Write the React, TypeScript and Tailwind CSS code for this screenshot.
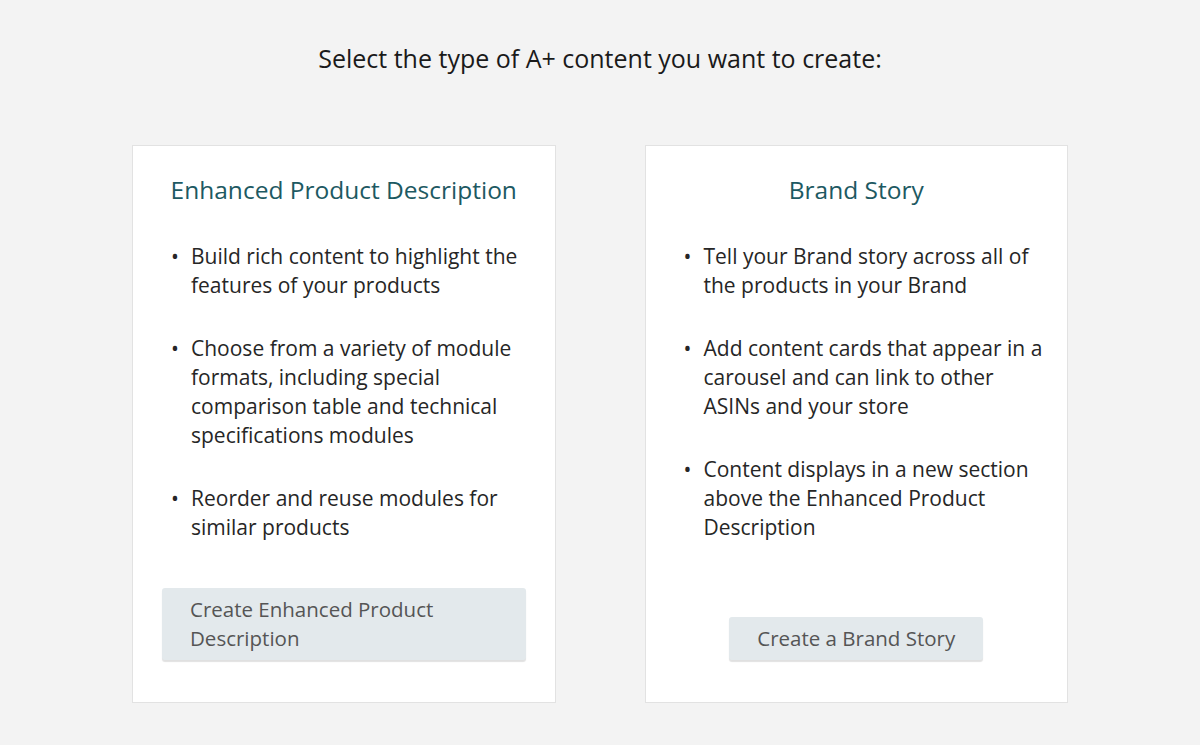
import React from "react";

const cards = [
  {
    title: "Enhanced Product Description",
    bullets: [
      "Build rich content to highlight the features of your products",
      "Choose from a variety of module formats, including special comparison table and technical specifications modules",
      "Reorder and reuse modules for similar products",
    ],
    button: "Create Enhanced Product Description",
  },
  {
    title: "Brand Story",
    bullets: [
      "Tell your Brand story across all of the products in your Brand",
      "Add content cards that appear in a carousel and can link to other ASINs and your store",
      "Content displays in a new section above the Enhanced Product Description",
    ],
    button: "Create a Brand Story",
  },
];

const App: React.FC = () => (
  <div className="min-h-[745px] bg-[#f3f3f3] pt-[42px] font-['Open_Sans',sans-serif]">
    <h1 className="text-center text-[25px] leading-[32px] text-[#1a1a1a]">
      Select the type of A+ content you want to create:
    </h1>
    <div className="mx-auto mt-[71px] grid w-[936px] grid-cols-2 gap-[89px]">
      {cards.map((card) => (
        <div
          key={card.title}
          className="flex flex-col border border-[#e2e2e2] bg-white px-[29px] pt-[28px] pb-[42px]"
        >
          <h2 className="text-center text-[24.5px] leading-[32px] text-[#1d5962]">{card.title}</h2>
          <ul className="mt-[36px] ml-[9px] mr-[-9px] flex flex-col gap-[34px]">
            {card.bullets.map((b) => (
              <li key={b} className="flex text-[21px] leading-[29px] text-[#262626]">
                <span className="w-[20px] shrink-0">•</span>
                <span>{b}</span>
              </li>
            ))}
          </ul>
          <div className="mt-auto flex justify-center pt-[46px]">
            <button className="rounded-[3px] bg-[#e3e9ec] px-[28px] py-[7px] text-left text-[20.5px] leading-[29px] text-[#555] shadow-[0_2px_1px_rgba(0,0,0,0.12)]">
              {card.button}
            </button>
          </div>
        </div>
      ))}
    </div>
  </div>
);

export default App;
